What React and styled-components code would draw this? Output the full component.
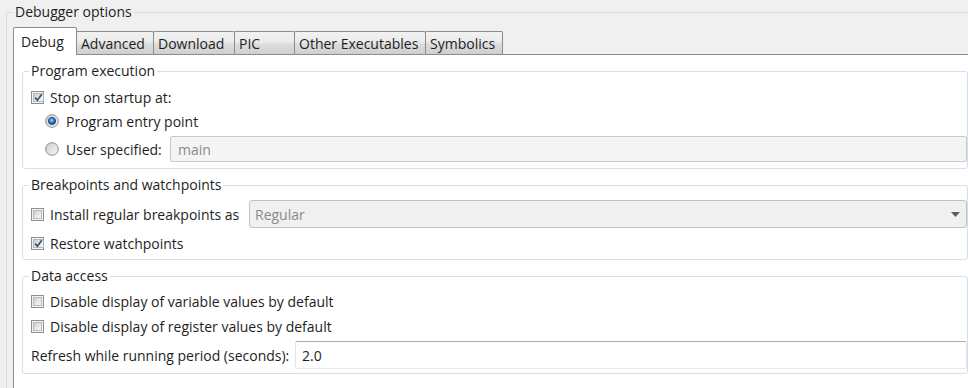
import React from "react";
import styled, { createGlobalStyle } from "styled-components";

const GlobalStyle = createGlobalStyle`
  html, body {
    margin: 0;
    padding: 0;
    background: #f0f0f0;
  }
  body {
    font-family: "Open Sans", "Noto Sans", "Liberation Sans", sans-serif;
    font-size: 14px;
    color: #1e1e1e;
  }
`;

const tabs = [
    { title: "Debug", width: 64 },
    { title: "Advanced", width: 78 },
    { title: "Download", width: 82 },
    { title: "PIC", width: 61 },
    { title: "Other Executables", width: 132 },
    { title: "Symbolics", width: 78 },
];

const CheckMark = () => (
    <svg width="9" height="9" viewBox="0 0 9 9">
        <path d="M1.2 4.6 L3.4 7.2 L7.8 1.2" fill="none" stroke="#3b4f73" strokeWidth="1.7" />
    </svg>
);

const Checkbox = ({ checked }) => (
    <CheckBoxFrame>
        <CheckBoxInner>{checked && <CheckMark />}</CheckBoxInner>
    </CheckBoxFrame>
);

const Radio = ({ checked }) => (
    <RadioSvg width="14" height="14" viewBox="0 0 14 14">
        <defs>
            <linearGradient id="rbg" x1="0" y1="0" x2="1" y2="1">
                <stop offset="0" stopColor="#c9cbcf" />
                <stop offset="1" stopColor="#f8f8f8" />
            </linearGradient>
            <radialGradient id="rdot" cx="0.45" cy="0.4" r="0.6">
                <stop offset="0" stopColor="#a9e0ff" />
                <stop offset="0.45" stopColor="#3a8ad6" />
                <stop offset="1" stopColor="#143e7c" />
            </radialGradient>
        </defs>
        <circle cx="7" cy="7" r="6.3" fill="url(#rbg)" stroke="#8c8e91" strokeWidth="1" />
        {checked && <circle cx="7" cy="7" r="3.6" fill="url(#rdot)" stroke="#1b3b6b" strokeWidth="0.8" />}
    </RadioSvg>
);

const App = () => {
    return (
        <Page>
            <GlobalStyle />
            <OuterGroup>
                <OuterLegend>Debugger options</OuterLegend>
                <TabBar>
                    {tabs.map((tab, index) => (
                        <Tab key={tab.title} $active={index === 0} $width={tab.width} $first={index === 0}>
                            {tab.title}
                        </Tab>
                    ))}
                </TabBar>
                <TabPanel>
                    <Group>
                        <GroupLegend>Program execution</GroupLegend>
                        <Row $h={24} $mt={5}>
                            <Checkbox checked />
                            <Label $gap={6}>Stop on startup at:</Label>
                        </Row>
                        <Row $h={24} $indent={14}>
                            <Radio checked />
                            <Label $gap={7}>Program entry point</Label>
                        </Row>
                        <Row $h={28} $mt={2} $indent={14}>
                            <Radio />
                            <Label $gap={7} $width={104}>User specified:</Label>
                            <TextField $disabled>main</TextField>
                        </Row>
                    </Group>

                    <Group $mt={7} $pb={4}>
                        <GroupLegend>Breakpoints and watchpoints</GroupLegend>
                        <Row $h={30} $mt={5}>
                            <Checkbox />
                            <Label $gap={6} $width={199}>Install regular breakpoints as</Label>
                            <SelectField>
                                <span>Regular</span>
                                <svg width="9" height="5" viewBox="0 0 9 5">
                                    <path d="M0 0 H9 L4.5 5 Z" fill="#5e5e5e" />
                                </svg>
                            </SelectField>
                        </Row>
                        <Row $h={24} $mt={2}>
                            <Checkbox checked />
                            <Label $gap={6}>Restore watchpoints</Label>
                        </Row>
                    </Group>

                    <Group $mt={7} $pb={3}>
                        <GroupLegend>Data access</GroupLegend>
                        <Row $h={24} $mt={4}>
                            <Checkbox />
                            <Label $gap={6}>Disable display of variable values by default</Label>
                        </Row>
                        <Row $h={24} $mt={1}>
                            <Checkbox />
                            <Label $gap={6}>Disable display of register values by default</Label>
                        </Row>
                        <Row $h={30} $mt={2}>
                            <Label $width={264}>Refresh while running period (seconds):</Label>
                            <TextField $h={28}>2.0</TextField>
                        </Row>
                    </Group>
                </TabPanel>
            </OuterGroup>
        </Page>
    );
};

export default App;

const Page = styled.div`
    width: 968px;
    height: 388px;
    overflow: hidden;
    padding-top: 3px;
    box-sizing: border-box;
    background: #f0f0f0;
`;

const OuterGroup = styled.fieldset`
    box-sizing: border-box;
    width: 977px;
    margin: 0 0 0 6px;
    padding: 6px 6px 0 6px;
    border: 1px solid #d9dcdf;
    border-right: none;
    border-bottom: none;
`;

const OuterLegend = styled.legend`
    padding: 0 2px;
    line-height: 18px;
    font-size: 14px;
    color: #1e1e1e;
`;

const TabBar = styled.div`
    display: flex;
    align-items: flex-end;
    height: 27px;
`;

const Tab = styled.div`
    box-sizing: border-box;
    width: ${(p) => p.$width}px;
    height: ${(p) => (p.$active ? 28 : 23)}px;
    margin-left: ${(p) => (p.$first ? 0 : -1)}px;
    margin-bottom: ${(p) => (p.$active ? -1 : 0)}px;
    padding-left: ${(p) => (p.$active ? 7 : 4)}px;
    display: flex;
    align-items: center;
    border: 1px solid #898c95;
    border-bottom: none;
    border-radius: 2px 2px 0 0;
    background: ${(p) =>
        p.$active ? "#ffffff" : "linear-gradient(#f2f2f2 0%, #ebebeb 45%, #dddddd 55%, #cfcfcf 100%)"};
    position: relative;
    z-index: ${(p) => (p.$active ? 2 : 1)};
    white-space: nowrap;
    color: #1e1e1e;
`;

const TabPanel = styled.div`
    min-height: 360px;
    background: #ffffff;
    border-top: 1px solid #898c95;
    border-left: 1px solid #898c95;
    padding: 7px 9px 0 8px;
`;

const Group = styled.fieldset`
    margin: ${(p) => p.$mt || 0}px 0 0 0;
    padding: 0 0 ${(p) => (p.$pb === undefined ? 5 : p.$pb)}px 8px;
    border: 1px solid #d5dfe5;
    border-radius: 3px;
    min-width: 0;
`;

const GroupLegend = styled.legend`
    padding: 0 2px;
    margin-left: -2px;
    line-height: 18px;
    font-size: 14px;
    color: #1e1e1e;
`;

const Row = styled.div`
    display: flex;
    align-items: center;
    height: ${(p) => p.$h}px;
    margin-top: ${(p) => p.$mt || 0}px;
    padding-left: ${(p) => p.$indent || 0}px;
`;

const Label = styled.span`
    margin-left: ${(p) => p.$gap || 0}px;
    ${(p) => (p.$width ? `width: ${p.$width}px; flex: none;` : "")}
    white-space: nowrap;
    color: #1e1e1e;
`;

const CheckBoxFrame = styled.span`
    box-sizing: border-box;
    width: 13px;
    height: 13px;
    flex: none;
    border: 1px solid #8e8f8f;
    background: #f4f4f4;
    padding: 1px;
    display: flex;
`;

const CheckBoxInner = styled.span`
    flex: 1;
    display: flex;
    align-items: center;
    justify-content: center;
    background: linear-gradient(135deg, #cbcdd1 0%, #e6e7e9 55%, #f7f7f7 100%);
    border: 1px solid #b5b7ba;
    box-sizing: border-box;

    svg {
        flex: none;
    }
`;

const RadioSvg = styled.svg`
    flex: none;
    display: block;
`;

const TextField = styled.div`
    flex: 1;
    box-sizing: border-box;
    height: ${(p) => p.$h || 26}px;
    display: flex;
    align-items: center;
    padding-left: ${(p) => (p.$disabled ? 7 : 6)}px;
    border: 1px solid;
    border-color: ${(p) => (p.$disabled ? "#c9c9c9" : "#abadb3 #e2e3ea #e3e9ef #e2e3ea")};
    border-radius: 2px;
    background: ${(p) => (p.$disabled ? "#f4f4f4" : "#ffffff")};
    color: ${(p) => (p.$disabled ? "#8a8a8a" : "#1e1e1e")};
`;

const SelectField = styled.div`
    flex: 1;
    box-sizing: border-box;
    height: 28px;
    display: flex;
    align-items: center;
    justify-content: space-between;
    padding: 0 6px 0 5px;
    border: 1px solid #c2c2c2;
    border-radius: 3px;
    background: #f0f0f0;
    color: #8a8a8a;
`;
